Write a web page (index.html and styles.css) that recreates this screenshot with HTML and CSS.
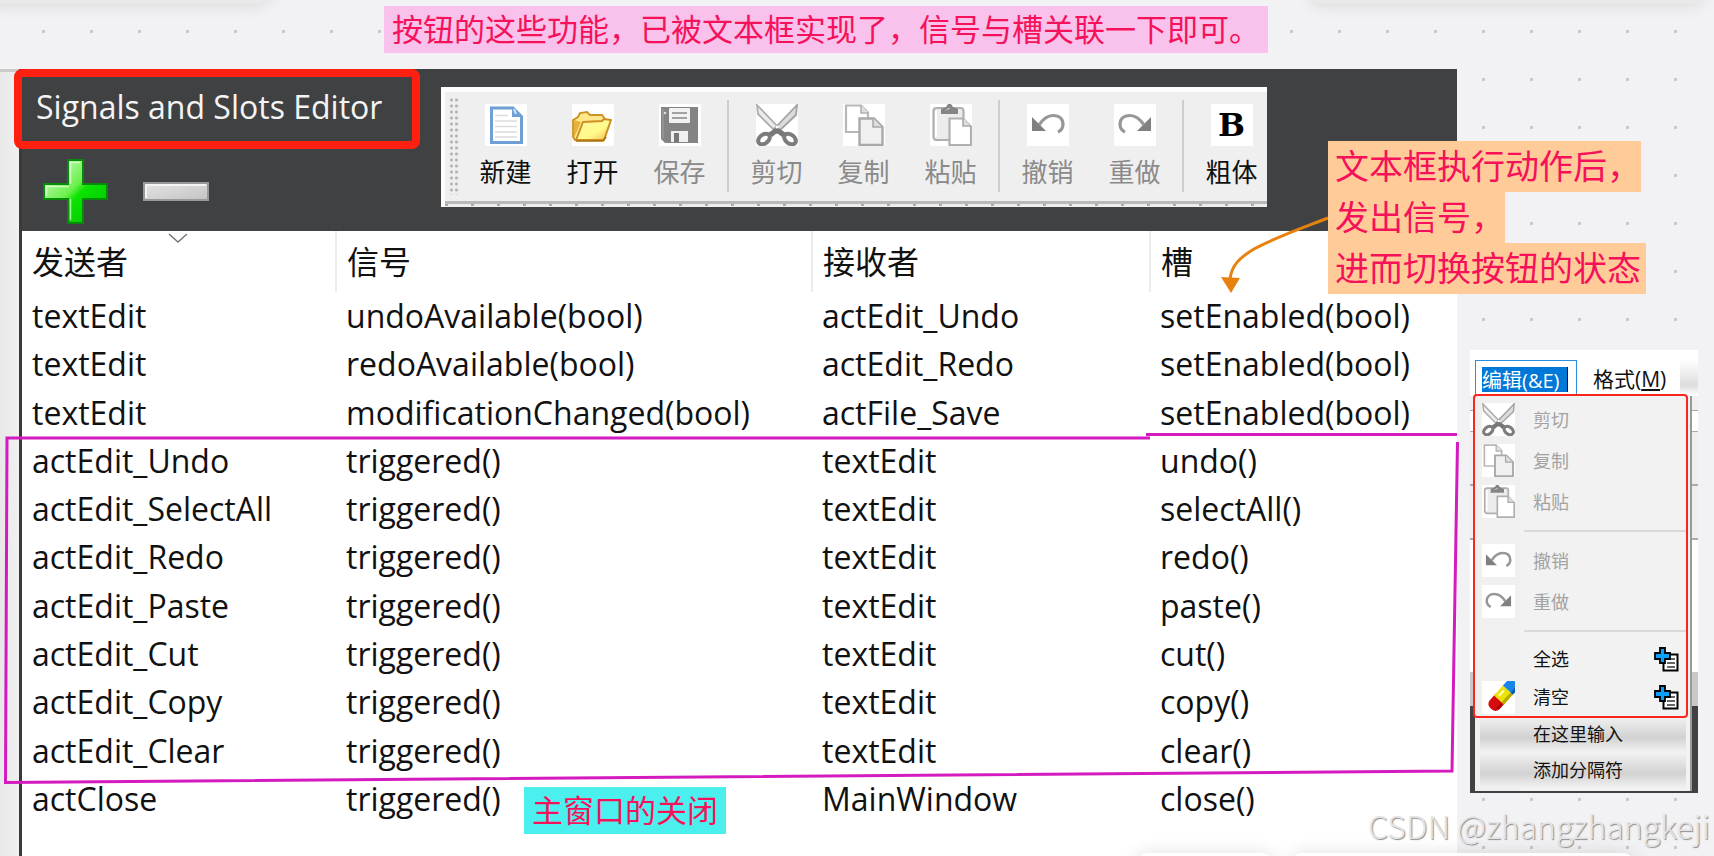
FILE: index.html
```html
<!DOCTYPE html>
<html lang="zh-CN">
<head>
<meta charset="utf-8">
<title>Signals and Slots Editor</title>
<link rel="stylesheet" href="styles.css">
</head>
<body>
<svg class="defs" aria-hidden="true">
  <defs>
    <linearGradient id="gGreen" x1="0" y1="0" x2="1" y2="1"><stop offset="0" stop-color="#d8ffd0"/><stop offset=".45" stop-color="#6df04e"/><stop offset=".55" stop-color="#0be400"/><stop offset="1" stop-color="#00c000"/></linearGradient>
    <linearGradient id="gGrey" x1="0" y1="0" x2="1" y2="1"><stop offset="0" stop-color="#e4e4e4"/><stop offset="1" stop-color="#c4c4c4"/></linearGradient>
    <linearGradient id="gFolder" x1="0" y1="0" x2="1" y2="1"><stop offset="0" stop-color="#fff7a0"/><stop offset=".6" stop-color="#fffb8a"/><stop offset="1" stop-color="#f7b548"/></linearGradient>
  </defs>
  <symbol id="i-new" viewBox="0 0 42 42"><path d="M6.500 4H28l8.500 8.500V38.500H6.500z" fill="#fff" stroke="#6f9fd4" stroke-width="3"/><path d="M27 3l10 10H27z" fill="#6f9fd4"/><path d="M29 5l2 5" stroke="#d9e8f8" stroke-width="2"/><path d="M10 11.500h13M10 17h22M10 22.500h22M10 28h22M10 33h22" stroke="#dcdcdc" stroke-width="1.500"/></symbol>
  <symbol id="i-open" viewBox="0 0 42 42"><path d="M1 33V16l5-3 2-4 7-1 3 3h12l3 4v4L8 36H3z" fill="#ffe98a" stroke="#cc9224" stroke-width="1.800"/><path d="M2 16v18l7-16z" fill="#e8b13c"/><path d="M4 36l7-18 19-1 2-2 7 1-7 20z" fill="url(#gFolder)" stroke="#cc8f22" stroke-width="2" stroke-linejoin="round"/><path d="M4 37h27l3-4" fill="none" stroke="#a9700e" stroke-width="1.600"/></symbol>
  <symbol id="i-save" viewBox="0 0 42 42"><path d="M2 3h37v36H6l-4-4z" fill="#848484"/><path d="M4 5v29" stroke="#999" stroke-width="1.500"/><rect x="10" y="4" width="21" height="15" rx="1" fill="#f2f2f2"/><path d="M13 9h15M13 14h15" stroke="#888" stroke-width="1.600"/><circle cx="6" cy="9" r="1.300" fill="#ddd"/><rect x="12" y="27" width="17" height="11" fill="#efefef"/><rect x="15" y="29" width="5" height="9" fill="#777"/></symbol>
  <symbol id="i-cut" viewBox="0 0 42 42"><path d="M1 1l23 24-3 4L2 10z" fill="#ececec" stroke="#acacac" stroke-width="1.800"/><path d="M41 1L18 25l3 4L40 11z" fill="#dcdcdc" stroke="#a2a2a2" stroke-width="1.800"/><path d="M12 29l9-6 9 6-4 4-5-4-5 4z" fill="#777"/><ellipse cx="8" cy="35" rx="6.500" ry="4.500" transform="rotate(-38 8 35)" fill="#fff" stroke="#7c7c7c" stroke-width="4"/><ellipse cx="34" cy="35" rx="6.500" ry="4.500" transform="rotate(38 34 35)" fill="#fff" stroke="#7c7c7c" stroke-width="4"/><circle cx="21" cy="23" r="1.500" fill="#fff"/></symbol>
  <symbol id="i-copy" viewBox="0 0 42 42"><path d="M3 1.500h15l7 7V28H3z" fill="#fff" stroke="#b8b8b8" stroke-width="2.200"/><path d="M18 1v8h8" fill="#e0e0e0" stroke="#b0b0b0" stroke-width="1.600"/><path d="M16.500 14.500H31l8.500 8.500V41h-23z" fill="#f0f0f0" stroke="#a9a9a9" stroke-width="2.400"/><path d="M30 14v9h9" fill="#ddd" stroke="#aaa" stroke-width="1.600"/></symbol>
  <symbol id="i-paste" viewBox="0 0 42 42"><rect x="3.500" y="4" width="30" height="32" rx="3" fill="#ececec" stroke="#b0b0b0" stroke-width="2.200"/><path d="M6 7v26" stroke="#fff" stroke-width="2"/><path d="M11 10V5l5-2 2-3h3l2 3 5 2v5z" fill="#858585"/><path d="M15 7l3-3h3z" fill="#ccc"/><path d="M19.500 14.500H33l8 8V41H19.500z" fill="#fff" stroke="#b0b0b0" stroke-width="2.200"/><path d="M33 14v8h8" fill="#ddd" stroke="#aaa" stroke-width="1.600"/></symbol>
  <symbol id="i-undo" viewBox="0 0 42 42"><path d="M5 13v14h14z" fill="#808080"/><path d="M12 21c4-6 8-9.500 14-9.500 7 0 10 4 10 9 0 4-2 6-5 7.500" fill="none" stroke="#979797" stroke-width="3.200"/></symbol>
  <symbol id="i-redo" viewBox="0 0 42 42"><path d="M37 13v14H23z" fill="#808080"/><path d="M30 21c-4-6-8-9.500-14-9.500-7 0-10 4-10 9 0 4 2 6 5 7.500" fill="none" stroke="#979797" stroke-width="3.200"/></symbol>
  <symbol id="i-clear" viewBox="0 0 42 42"><g transform="rotate(-48 26 20)"><rect x="5" y="11" width="24" height="17" rx="7" fill="#d60c0c"/><path d="M9 24h10v3h-8z" fill="#9c0505"/><rect x="20" y="11" width="17" height="17" fill="#ece20c"/><path d="M20 24h17v4H20z" fill="#b9a800"/><path d="M24 16h9" stroke="#fffbb0" stroke-width="3"/><rect x="37" y="11" width="14" height="17" fill="#1a84e8"/><path d="M37 24h14v4H37z" fill="#0b5cae"/></g></symbol>
  <symbol id="i-add" viewBox="0 0 25 25"><path d="M9.500 7.500h14v16h-14z" fill="#fff" stroke="#000" stroke-width="2"/><path d="M16 12h5M13 16h8M13 20h8" stroke="#333" stroke-width="1.500"/><path d="M6 1h5v5h5v6h-5v4H6v-4H1V6h5z" fill="#0aa0ff" stroke="#000" stroke-width="1.800"/></symbol>
</svg>

<div class="board">
  <div class="gutter"></div>

  <main class="editor">
    <header class="head">
      <h1 class="title">Signals and Slots Editor</h1>
      <div class="tools">
        <button class="tool" type="button" aria-label="Add"><svg viewBox="0 0 68 68"><path d="M25 2h17v24h24v17H42v24H25V43H1V26h24z" fill="#078a07"/><path d="M27 4h13v24h24v13H40v24H27V41H3V28h24z" fill="url(#gGreen)"/><path d="M28.500 27V5.500H38M4.500 39V29.500H27M28.500 42v21" fill="none" stroke="#e6ffe0" stroke-width="1.500" opacity=".7"/></svg></button>
        <button class="tool" type="button" aria-label="Remove"><svg viewBox="0 0 68 68"><path d="M1 25h66v19H1z" fill="#999"/><path d="M3 27h62v15H3z" fill="url(#gGrey)"/><path d="M4 41V28h60" fill="none" stroke="#f4f4f4" stroke-width="2"/></svg></button>
      </div>
    </header>

    <table class="links">
      <thead><tr><th class="c1">发送者<svg class="sort" viewBox="0 0 20 10"><path d="M1 1l9 8 9-8" fill="none" stroke="#777" stroke-width="1.500"/></svg></th><th class="c2">信号</th><th class="c3">接收者</th><th>槽</th></tr></thead>
      <tbody>
        <tr><td>textEdit</td><td>undoAvailable(bool)</td><td>actEdit_Undo</td><td>setEnabled(bool)</td></tr>
        <tr><td>textEdit</td><td>redoAvailable(bool)</td><td>actEdit_Redo</td><td>setEnabled(bool)</td></tr>
        <tr><td>textEdit</td><td>modificationChanged(bool)</td><td>actFile_Save</td><td>setEnabled(bool)</td></tr>
        <tr><td>actEdit_Undo</td><td>triggered()</td><td>textEdit</td><td>undo()</td></tr>
        <tr><td>actEdit_SelectAll</td><td>triggered()</td><td>textEdit</td><td>selectAll()</td></tr>
        <tr><td>actEdit_Redo</td><td>triggered()</td><td>textEdit</td><td>redo()</td></tr>
        <tr><td>actEdit_Paste</td><td>triggered()</td><td>textEdit</td><td>paste()</td></tr>
        <tr><td>actEdit_Cut</td><td>triggered()</td><td>textEdit</td><td>cut()</td></tr>
        <tr><td>actEdit_Copy</td><td>triggered()</td><td>textEdit</td><td>copy()</td></tr>
        <tr><td>actEdit_Clear</td><td>triggered()</td><td>textEdit</td><td>clear()</td></tr>
        <tr><td>actClose</td><td>triggered()</td><td>MainWindow</td><td>close()</td></tr>
      </tbody>
    </table>
  </main>

  <aside class="side">
    <div class="designer">
      <div class="menubar">
        <input class="edit-name" type="text" value="编辑(&amp;E)" aria-label="菜单名称">
        <button class="format" type="button">格式(<u>M</u>)</button>
        <span class="slot"></span>
      </div>
      <div class="menu">
        <button class="item" type="button" disabled><svg class="ic"><use href="#i-cut"/></svg><span>剪切</span></button>
        <button class="item" type="button" disabled><svg class="ic"><use href="#i-copy"/></svg><span>复制</span></button>
        <button class="item" type="button" disabled><svg class="ic"><use href="#i-paste"/></svg><span>粘贴</span></button>
        <div class="rule"></div>
        <button class="item" type="button" disabled><svg class="ic"><use href="#i-undo"/></svg><span>撤销</span></button>
        <button class="item" type="button" disabled><svg class="ic"><use href="#i-redo"/></svg><span>重做</span></button>
        <div class="rule"></div>
        <button class="item short" type="button"><span class="blank"></span><span>全选</span><svg class="add"><use href="#i-add"/></svg></button>
        <button class="item short" type="button"><svg class="ic"><use href="#i-clear"/></svg><span>清空</span><svg class="add"><use href="#i-add"/></svg></button>
        <button class="item entry" type="button"><span class="blank"></span><span>在这里输入</span></button>
        <button class="item entry" type="button"><span class="blank"></span><span>添加分隔符</span></button>
        <div class="menu-mark"></div>
      </div>
    </div>
  </aside>

  <div class="toolbar">
    <span class="grip"></span>
    <button class="tb" type="button"><svg class="tile"><use href="#i-new"/></svg>新建</button>
    <button class="tb" type="button"><svg class="tile"><use href="#i-open"/></svg>打开</button>
    <button class="tb" type="button" disabled><svg class="tile"><use href="#i-save"/></svg>保存</button>
    <span class="sep"></span>
    <button class="tb" type="button" disabled><svg class="tile"><use href="#i-cut"/></svg>剪切</button>
    <button class="tb" type="button" disabled><svg class="tile"><use href="#i-copy"/></svg>复制</button>
    <button class="tb" type="button" disabled><svg class="tile"><use href="#i-paste"/></svg>粘贴</button>
    <span class="sep"></span>
    <button class="tb" type="button" disabled><svg class="tile"><use href="#i-undo"/></svg>撤销</button>
    <button class="tb" type="button" disabled><svg class="tile"><use href="#i-redo"/></svg>重做</button>
    <span class="sep"></span>
    <button class="tb" type="button"><span class="tile bold">B</span>粗体</button>
  </div>

  <div class="title-mark"></div>
  <svg class="ink" width="1714" height="856" viewBox="0 0 1714 856" aria-hidden="true">
    <path d="M1150 438H7L5.500 782.500 1452 771 1457.500 442M1146 434.500h311" fill="none" stroke="#d41bbf" stroke-width="3"/>
    <path d="M1328 218c-26 10-52 19-74 31-15 9-23 17-24 31" fill="none" stroke="#e8820e" stroke-width="3"/>
    <path d="M1221 277l19 1-9 15z" fill="#e8820e"/>
  </svg>

  <p class="note pink">按钮的这些功能，已被文本框实现了，信号与槽关联一下即可。</p>
  <p class="note teal">主窗口的关闭</p>
  <div class="note-stack">
    <p class="orange comma">文本框执行动作后，</p>
    <p class="orange comma">发出信号，</p>
    <p class="orange">进而切换按钮的状态</p>
  </div>
  <div class="chip chip-top-left"></div>
  <div class="chip chip-top-right"></div>
  <div class="chip chip-a"></div>
  <div class="chip chip-b"></div>
  <p class="watermark">CSDN @zhangzhangkeji</p>
</div>
</body>
</html>
```

FILE: styles.css
```css
* { box-sizing: border-box; }

body {
  margin: 0;
  background: #f2f2f4;
  font-family: "Open Sans", "Noto Sans CJK SC", sans-serif;
  color: #111;
}

p, h1 { margin: 0; font-weight: 400; }

button, input {
  font: inherit;
  color: inherit;
  border: 0;
  padding: 0;
  background: none;
}

.defs { position: absolute; width: 0; height: 0; }

.board {
  position: relative;
  display: flex;
  min-height: 100vh;
  padding-top: 69px;
  overflow: hidden;
  background: conic-gradient(from 0deg at 3px 3px, transparent 90deg, transparent 270deg, #c9c9cb 0) -6px -18px / 48px 48px;
}

.gutter {
  width: 19px;
  border-top: 3px solid #cbcbcb;
  background: linear-gradient(90deg, #e8e8e8, #f0f0f0);
}

/* Editor window */
.editor {
  flex: 1;
  background: #fff;
  border-left: 3px solid #3a3a3b;
}

.head {
  height: 162px;
  padding: 14px;
  background: #404142;
}

.title {
  font-size: 32px;
  line-height: 48px;
  color: #f4f4f4;
}

.tools { display: flex; gap: 32px; padding: 26px 6px; }
.tool { width: 68px; height: 68px; }
.tool svg { display: block; width: 68px; height: 68px; }

.links {
  width: 100%;
  height: 592px;
  table-layout: fixed;
  border-collapse: collapse;
  font-size: 32px;
  line-height: 40px;
}

.links th {
  position: relative;
  height: 61px;
  padding: 0 10px;
  text-align: left;
  font-weight: 400;
  border-right: 2px solid #ececec;
}

.links th:last-child { border-right: 0; }
.links td { padding: 0 10px; white-space: nowrap; }
.c1 { width: 314px; }
.c2 { width: 476px; }
.c3 { width: 338px; }
.sort { position: absolute; left: 146px; top: 2px; width: 20px; height: 10px; }

/* Form toolbar */
.toolbar {
  position: absolute;
  left: 441px;
  top: 87px;
  width: 826px;
  height: 120px;
  display: flex;
  overflow: hidden;
  border: solid #fcfcfc;
  border-width: 5px 0 0 4px;
  background:
    linear-gradient(#b9b9b9, #b9b9b9) 0 109px / 100% 3px no-repeat,
    repeating-linear-gradient(90deg, #aaa 0 3px, #ececec 3px 26px) 0 112px / 100% 2px no-repeat,
    #efefef;
}

.grip {
  flex: none;
  width: 9px;
  height: 98px;
  margin: 5px 4px;
  background: radial-gradient(circle, #b4b4b4 1px, transparent 2px) 0 0 / 5px 6px;
}

.tb {
  flex: none;
  display: flex;
  flex-direction: column;
  align-items: center;
  gap: 8px;
  width: 87px;
  padding-top: 12px;
  font-size: 26px;
  line-height: 36px;
  color: #111;
}

.tb:disabled { color: #8a8a8a; }
.tile { display: block; width: 42px; height: 42px; background: #fff; }

.bold {
  font: bold 32px/42px "DejaVu Serif", serif;
  text-align: center;
  color: #000;
}

.sep { flex: none; width: 2px; height: 92px; margin: 8px 4px; background: #cdcdcd; }

/* Menu designer */
.side { width: 257px; padding: 281px 16px 0 13px; }

.designer {
  height: 443px;
  padding: 0 5px;
  background: linear-gradient(#fff 46px, #f0f0f0 46px 60px, #aaa 60px 61px, #fff 61px 81px, #aaa 81px 82px, #efefef 82px 134px, #aaa 134px 136px, #efefef 136px 188px, #aaa 188px 190px, #fff 190px 322px, #c8c8c8 322px 356px, #404142 356px);
}

.menubar {
  display: flex;
  align-items: flex-start;
  height: 46px;
  padding-top: 10px;
  margin-right: -5px;
  font-size: 20px;
  line-height: 26px;
}

.edit-name {
  width: 102px;
  height: 36px;
  padding: 6px 8px 3px 6px;
  border: 1px solid #2a8fe0;
  color: #fff;
  background: linear-gradient(90deg, #0078d7 85px, #111 85px) content-box no-repeat, #fff;
}

.format { margin: 6px 14px 0 16px; white-space: nowrap; font-size: 21px; }
.slot { flex: 1; height: 36px; background: linear-gradient(#fff, #ddd 70%, #fff); }

.menu {
  position: relative;
  width: 217px;
  padding: 3px 4px 3px 5px;
  border-right: 2px solid #999;
  background: linear-gradient(90deg, #f0f0f0 46px, #f2f2f2 46px);
  font-size: 18px;
}

.item {
  display: flex;
  align-items: center;
  width: 100%;
  height: 41px;
  gap: 18px;
  padding: 0 7px 0 2px;
  text-align: left;
  line-height: 26px;
}

.item:disabled { color: #a3a3a3; }
.ic { flex: none; width: 33px; height: 33px; background: #fff; }
.blank { flex: none; width: 33px; }
.add { width: 25px; height: 25px; margin-left: auto; }
.short { height: 38px; }
.entry { height: 36px; background: linear-gradient(#f2f2f2, #d2d2d2 60%, #f2f2f2); }
.rule { height: 2px; margin: 8px 0 8px 44px; background: #dadada; }

.menu-mark {
  position: absolute;
  left: -2px;
  top: -2px;
  width: 215px;
  height: 324px;
  border: 2px solid #f8261c;
  border-radius: 4px;
}

/* Hand-drawn marks and notes pinned to the board */
.title-mark {
  position: absolute;
  left: 14px;
  top: 69px;
  width: 406px;
  height: 80px;
  border: 8px solid #ff2012;
  border-radius: 8px;
}

.ink { position: absolute; left: 0; top: 0; }

.note {
  position: absolute;
  padding: 0 8px;
  font-size: 31px;
  line-height: 47px;
  color: #f5125a;
  white-space: nowrap;
}

.pink { left: 384px; top: 6px; background: #f8c2ec; }
.teal { left: 524px; top: 787px; background: #4bf0ee; }

.note-stack {
  position: absolute;
  left: 1328px;
  top: 141px;
  display: flex;
  flex-direction: column;
  align-items: flex-start;
}

.orange {
  padding: 0 5px 0 7px;
  font-size: 34px;
  line-height: 51px;
  color: #f5125a;
  background: #ffcc99;
  white-space: nowrap;
}

.comma { padding-right: 0; }

.chip { position: absolute; border-radius: 12px; background: #fff; box-shadow: 0 0 18px rgba(0, 0, 0, .12); }
.chip-top-left { left: -20px; top: -36px; width: 290px; height: 40px; background: #e9e9e9; }
.chip-top-right { left: 1310px; top: -36px; width: 394px; height: 40px; background: #e9e9e9; }
.chip-a { left: 1136px; top: 853px; width: 138px; height: 30px; }
.chip-b { left: 1290px; top: 853px; width: 345px; height: 30px; }

.watermark {
  position: absolute;
  right: 4px;
  top: 801px;
  font-family: "Noto Sans CJK SC", sans-serif;
  font-weight: 300;
  font-size: 32px;
  line-height: 48px;
  color: #e4e4e6;
  text-shadow: 1px 1px 1px #8c8c8c;
  white-space: nowrap;
}
```
